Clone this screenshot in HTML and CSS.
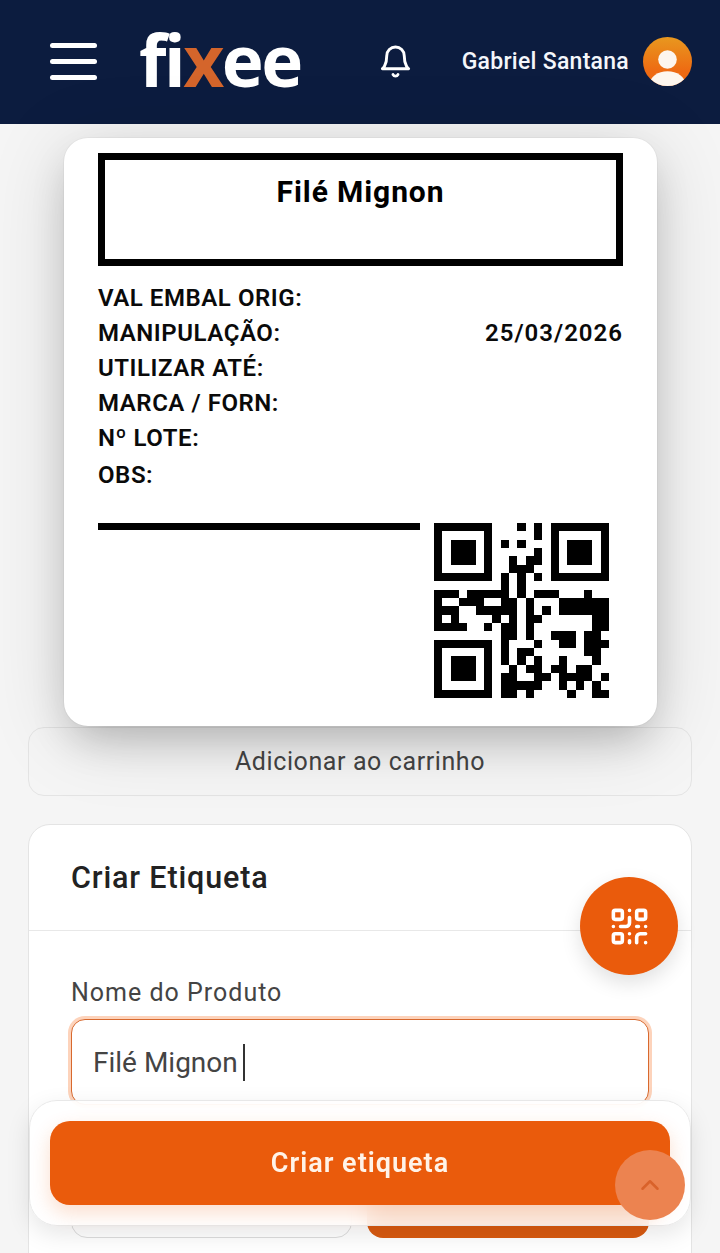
FILE: index.html
```html
<!DOCTYPE html>
<html lang="pt-BR">
<head>
    <meta charset="UTF-8">
    <meta name="viewport" content="width=device-width, initial-scale=1.0">
    <title>Fixee - Criar Etiqueta</title>
    <link rel="stylesheet" href="styles.css">
</head>
<body>
    <header class="topbar">
        <button class="menu-btn" aria-label="Menu"><span></span><span></span><span></span></button>
        <div class="logo">fi<span class="logo-x">x</span>ee</div>
        <svg class="bell" viewBox="0 0 24 24" fill="none" stroke="#fff" stroke-width="2" stroke-linecap="round" stroke-linejoin="round">
            <path d="M6 8a6 6 0 0 1 12 0c0 7 3 9 3 9H3s3-2 3-9"/>
            <path d="M10.3 21a1.94 1.94 0 0 0 3.4 0"/>
        </svg>
        <div class="user">
            <span class="user-name">Gabriel Santana</span>
            <svg class="avatar" viewBox="0 0 50 50">
                <defs>
                    <linearGradient id="avatarBg" x1="0" y1="0" x2="0" y2="1">
                        <stop offset="0" stop-color="#e8981f"/>
                        <stop offset="0.7" stop-color="#ee6a12"/>
                    </linearGradient>
                    <clipPath id="avatarClip"><circle cx="25" cy="25" r="25"/></clipPath>
                </defs>
                <circle cx="25" cy="25" r="25" fill="url(#avatarBg)"/>
                <g clip-path="url(#avatarClip)" fill="#fdf6ee">
                    <circle cx="25" cy="23" r="9.5"/>
                    <ellipse cx="25" cy="48" rx="18" ry="13"/>
                </g>
            </svg>
        </div>
    </header>

    <main class="content">
        <section class="label-card">
            <div class="label-title"><h1>Filé Mignon</h1></div>
            <div class="label-rows">
                <div class="label-row"><span>VAL EMBAL ORIG:</span></div>
                <div class="label-row"><span>MANIPULAÇÃO:</span><span class="label-date">25/03/2026</span></div>
                <div class="label-row"><span>UTILIZAR ATÉ:</span></div>
                <div class="label-row"><span>MARCA / FORN:</span></div>
                <div class="label-row"><span>Nº LOTE:</span></div>
                <div class="label-row label-row-obs"><span>OBS:</span></div>
            </div>
            <div class="label-foot">
                <div class="sign-line"></div>
                <svg class="qr" viewBox="0 0 21 21" shape-rendering="crispEdges">
                    <path fill-rule="evenodd" d="M0 0h7v7h-7zM1 1v5h5v-5zM2 2h3v3h-3zM14 0h7v7h-7zM15 1v5h5v-5zM16 2h3v3h-3zM0 14h7v7h-7zM1 15v5h5v-5zM2 16h3v3h-3z"/>
                    <path fill="none" stroke="#000" d="M10 .5h1M12 .5h1M12 1.5h1M8 2.5h1M10 2.5h1M12 3.5h1M9 4.5h1M11 4.5h2M9 5.5h3M8 6.5h1M10 6.5h1M12 6.5h1M8 7.5h1M10 7.5h1M0 8.5h3M4 8.5h5M10 8.5h1M12 8.5h3M18 8.5h1M0 9.5h1M3 9.5h3M8 9.5h2M11 9.5h1M15 9.5h6M0 10.5h3M5 10.5h5M11 10.5h1M13 10.5h1M15 10.5h6M0 11.5h1M2 11.5h1M7 11.5h1M9 11.5h1M11 11.5h2M19 11.5h2M0 12.5h4M6 12.5h1M8 12.5h2M11 12.5h1M19 12.5h2M8 13.5h2M11 13.5h1M14 13.5h3M18 13.5h2M8 14.5h1M12 14.5h1M15 14.5h2M18 14.5h3M8 15.5h1M10 15.5h2M18 15.5h2M8 16.5h1M10 16.5h1M12 16.5h1M15 16.5h1M19 16.5h1M9 17.5h1M11 17.5h2M14 17.5h2M17 17.5h2M8 18.5h2M12 18.5h2M15 18.5h4M20 18.5h1M8 19.5h5M15 19.5h1M17 19.5h1M19 19.5h1M8 20.5h2M11 20.5h1M16 20.5h1M19 20.5h2"/>
                </svg>
            </div>
        </section>

        <button class="add-cart">Adicionar ao carrinho</button>

        <section class="form-card">
            <div class="form-head"><h2>Criar Etiqueta</h2></div>
            <div class="form-body">
                <label class="field-label">Nome do Produto</label>
                <div class="field-input"><span>Filé Mignon</span><i class="caret"></i></div>
                <div class="form-actions">
                    <button class="btn-outline"></button>
                    <button class="btn-solid"></button>
                </div>
            </div>
        </section>
    </main>

    <button class="fab-qr" aria-label="QR">
        <svg viewBox="0 0 24 24" fill="none" stroke="#fff" stroke-width="2" stroke-linecap="round" stroke-linejoin="round">
            <rect x="3" y="3" width="5" height="5" rx="1"/>
            <rect x="16" y="3" width="5" height="5" rx="1"/>
            <rect x="3" y="16" width="5" height="5" rx="1"/>
            <path d="M21 16h-3a2 2 0 0 0-2 2v3M21 21v.01M12 7v3a2 2 0 0 1-2 2H7M3 12h.01M12 3h.01M12 16v.01M16 12h1M21 12v.01M12 21v-1"/>
        </svg>
    </button>

    <div class="bottom-bar">
        <button class="btn-create">Criar etiqueta</button>
    </div>

    <button class="scroll-top" aria-label="Topo">
        <svg viewBox="0 0 24 24" fill="none" stroke="#d9622a" stroke-width="2" stroke-linecap="round" stroke-linejoin="round">
            <path d="m18 15-6-6-6 6"/>
        </svg>
    </button>
</body>
</html>
```

FILE: styles.css
```css
* {
    box-sizing: border-box;
}

html, body {
    height: 100%;
}

body {
    margin: 0;
    overflow: hidden;
    background-color: #f5f5f5;
    font-family: Roboto, "Noto Sans", sans-serif;
    color: #111;
}

button {
    font-family: inherit;
    cursor: pointer;
}

/* Top bar */
.topbar {
    display: flex;
    align-items: center;
    height: 124px;
    padding: 0 28px 1px 50px;
    background-color: #0c1c3f;
}

.menu-btn {
    display: flex;
    flex-direction: column;
    gap: 10.5px;
    width: 47px;
    padding: 0;
    background: none;
    border: none;
}

.menu-btn span {
    height: 5.5px;
    background-color: #fff;
    border-radius: 3px;
}

.logo {
    margin: 0 0 4px 42px;
    font-family: "Open Sans", sans-serif;
    font-size: 71px;
    font-weight: 700;
    line-height: 1;
    letter-spacing: -2.5px;
    color: #fff;
}

.logo-x {
    color: #d4652b;
}

.bell {
    width: 35px;
    height: 35px;
    margin-left: 77px;
}

.user {
    display: flex;
    align-items: center;
    gap: 14px;
    margin-left: auto;
}

.user-name {
    font-size: 23px;
    font-weight: 500;
    letter-spacing: 0.27px;
    color: #f4f6fb;
}

.avatar {
    width: 49px;
    height: 49px;
}

/* Page column */
.content {
    padding: 14px 28px 0;
}

/* Printed label */
.label-card {
    position: relative;
    z-index: 2;
    width: 593px;
    height: 588px;
    margin: 0 0 1px 36px;
    padding: 15px 34px;
    background-color: #fff;
    border-radius: 24px;
    box-shadow: 0 0 0 1px rgba(0, 0, 0, 0.03), 0 20px 40px -8px rgba(0, 0, 0, 0.2), 0 10px 80px rgba(0, 0, 0, 0.14);
}

.label-title {
    height: 113px;
    padding-top: 14px;
    text-align: center;
    border: 7px solid #000;
}

.label-title h1 {
    margin: 0;
    font-size: 30px;
    font-weight: 700;
    line-height: 36px;
    letter-spacing: 0.9px;
    color: #000;
}

.label-rows {
    margin-top: 15px;
}

.label-row {
    display: flex;
    justify-content: space-between;
    height: 35px;
    font-size: 24px;
    font-weight: 600;
    line-height: 35px;
    letter-spacing: 0.55px;
    color: #0a0a0a;
}

.label-date {
    letter-spacing: 1px;
}

.label-row-obs {
    margin-top: 2px;
}

.label-foot {
    display: flex;
    margin-top: 30px;
}

.sign-line {
    flex: 1;
    height: 7px;
    background-color: #000;
}

.qr {
    width: 175px;
    height: 175px;
    margin: 0 14px;
}

/* Add to cart */
.add-cart {
    display: block;
    width: 100%;
    height: 69px;
    font-size: 25px;
    letter-spacing: 0.6px;
    color: #444;
    background: transparent;
    border: 1px solid #e4e4e4;
    border-radius: 16px;
}

/* Form card */
.form-card {
    height: 480px;
    margin-top: 28px;
    background-color: #fff;
    border: 1px solid #e4e4e4;
    border-radius: 22px;
}

.form-head {
    height: 106px;
    padding: 0 42px;
    border-bottom: 1px solid #e8e8e8;
}

.form-head h2 {
    margin: 0;
    font-size: 30.5px;
    font-weight: 500;
    line-height: 106px;
    letter-spacing: 0.85px;
    color: #222;
}

.form-body {
    padding: 44px 42px 0;
}

.field-label {
    display: block;
    font-size: 25px;
    font-weight: 400;
    line-height: 36px;
    letter-spacing: 1px;
    color: #444;
}

.field-input {
    display: flex;
    align-items: center;
    gap: 5px;
    height: 86px;
    margin-top: 8px;
    padding: 0 21px;
    font-size: 28px;
    color: #444;
    background-color: #fff;
    border: 1.5px solid #d8692e;
    border-radius: 14px;
    box-shadow: 0 0 0 3px #fdd3bb;
}

.caret {
    width: 2px;
    height: 37px;
    background-color: #333;
}

.form-actions {
    display: flex;
    gap: 15px;
    margin-top: 63px;
}

.form-actions button {
    height: 70px;
    border-radius: 16px;
}

.btn-outline {
    flex: 0 0 281px;
    background-color: #fff;
    border: 1px solid #ddd;
}

.btn-solid {
    flex: 1;
    background-color: #d95a10;
    border: none;
}

/* Floating stuff */
.fab-qr {
    position: fixed;
    left: 580px;
    top: 877px;
    z-index: 3;
    display: flex;
    align-items: center;
    justify-content: center;
    width: 98px;
    height: 98px;
    padding: 0;
    background-color: #ea5b0c;
    border: none;
    border-radius: 50%;
    box-shadow: 0 8px 20px rgba(0, 0, 0, 0.12);
}

.fab-qr svg {
    width: 43px;
    height: 43px;
}

.bottom-bar {
    position: fixed;
    left: 29px;
    right: 29px;
    bottom: 27px;
    z-index: 3;
    padding: 20px;
    background-color: rgba(255, 255, 255, 0.88);
    border: 1px solid #e8e8e8;
    border-radius: 28px;
    box-shadow: 0 8px 24px rgba(0, 0, 0, 0.1);
    backdrop-filter: blur(12px);
}

.btn-create {
    display: block;
    width: 100%;
    height: 84px;
    font-size: 27px;
    font-weight: 600;
    letter-spacing: 1px;
    color: #fff3e8;
    background-color: #ea5b0c;
    border: none;
    border-radius: 20px;
    box-shadow: 0 8px 20px rgba(234, 91, 12, 0.2);
}

.scroll-top {
    position: fixed;
    left: 615px;
    top: 1150px;
    z-index: 4;
    display: flex;
    align-items: center;
    justify-content: center;
    width: 70px;
    height: 70px;
    padding: 0;
    background-color: #ec8350;
    border: none;
    border-radius: 50%;
}

.scroll-top svg {
    width: 30px;
    height: 30px;
}
```
